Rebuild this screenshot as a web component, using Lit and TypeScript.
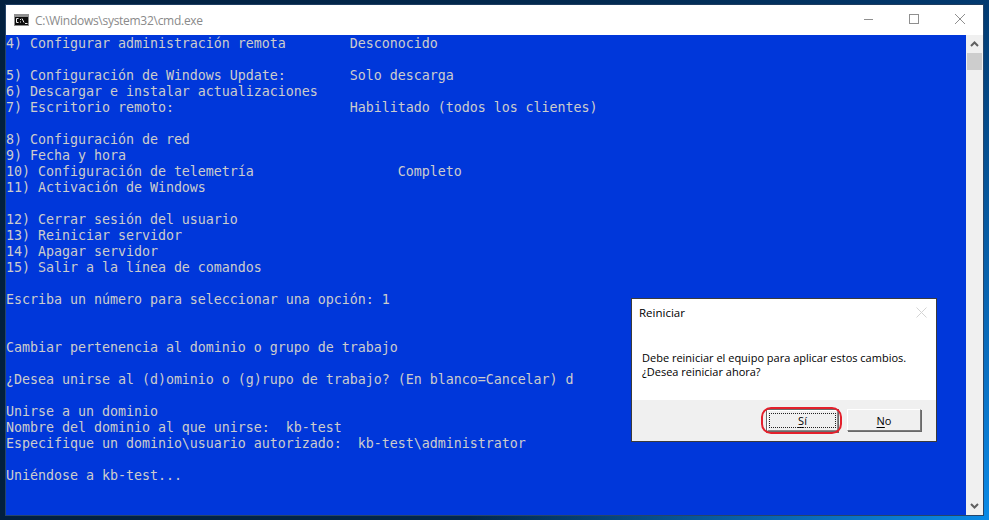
import { LitElement, html, css } from "lit";
import { customElement } from "lit/decorators.js";

const LINES = [
  "4) Configurar administración remota        Desconocido",
  "",
  "5) Configuración de Windows Update:        Solo descarga",
  "6) Descargar e instalar actualizaciones",
  "7) Escritorio remoto:                      Habilitado (todos los clientes)",
  "",
  "8) Configuración de red",
  "9) Fecha y hora",
  "10) Configuración de telemetría                  Completo",
  "11) Activación de Windows",
  "",
  "12) Cerrar sesión del usuario",
  "13) Reiniciar servidor",
  "14) Apagar servidor",
  "15) Salir a la línea de comandos",
  "",
  "Escriba un número para seleccionar una opción: 1",
  "",
  "",
  "Cambiar pertenencia al dominio o grupo de trabajo",
  "",
  "¿Desea unirse al (d)ominio o (g)rupo de trabajo? (En blanco=Cancelar) d",
  "",
  "Unirse a un dominio",
  "Nombre del dominio al que unirse:  kb-test",
  "Especifique un dominio\\usuario autorizado:  kb-test\\administrator",
  "",
  "Uniéndose a kb-test...",
];

@customElement("app-root")
export class AppRoot extends LitElement {
  static styles = css`
    :host { display: block; width: 989px; height: 520px; overflow: hidden; }
    .desktop {
      width: 989px; height: 520px; padding: 4px 5px 4px 5px; box-sizing: border-box;
      background:
        radial-gradient(ellipse 520px 520px at 100% 100%, #0a8ae6 0%, #0a6fc0 30%, rgba(2, 48, 94, 0) 100%),
        linear-gradient(90deg, #02203f 0%, #022a50 60%, #023a70 100%);
    }
    .window {
      height: 512px; box-sizing: border-box; display: flex; flex-direction: column;
      border: 1px solid #26456a; border-top-color: #1c3c60; position: relative;
    }
    .titlebar {
      height: 30px; flex: none; background: #fff; display: flex; align-items: center;
      padding-left: 8px; gap: 6px;
      font: 12px "Open Sans", "Noto Sans", sans-serif; color: #8a8a8a;
    }
    .title { flex: 1; letter-spacing: -0.28px; }
    .caps { display: flex; height: 30px; margin-top: -2px; }
    .cap { width: 46px; height: 30px; display: flex; align-items: center; justify-content: center; }
    .body { flex: 1; display: flex; min-height: 0; }
    .console {
      flex: 1; background: #0037da; color: #cccccc; padding: 1px 0 0 0; overflow: hidden;
      font: 13.33px/16px "DejaVu Sans Mono", monospace; white-space: pre; letter-spacing: -0.03px;
    }
    .line { height: 16px; }
    .sb { width: 17px; flex: none; background: #f0f0f0; display: flex; flex-direction: column; }
    .sb-btn { height: 18px; display: flex; align-items: center; justify-content: center; }
    .thumb { height: 17px; margin: 0 1px; background: #cdcdcd; }
    .sb-fill { flex: 1; }
    .dialog {
      position: absolute; left: 625px; top: 293px; width: 306px; height: 144px; box-sizing: border-box;
      border: 1px solid #3b3b3b; background: #fff; display: flex; flex-direction: column;
      font: 11px "Open Sans", "Noto Sans", sans-serif; color: #000;
    }
    .d-title { height: 26px; flex: none; display: flex; align-items: center; justify-content: space-between;
      padding: 0 9px 0 7px; font-size: 11.5px; }
    .d-msg { flex: 1; padding: 26px 0 0 10px; line-height: 14px; font-size: 11px; }
    .d-foot { height: 41px; flex: none; background: #f0f0f0; display: flex; gap: 9px; justify-content: flex-end;
      align-items: flex-start; padding: 9px 15px 0 0; box-sizing: border-box; }
    .btn {
      position: relative; width: 74px; height: 22px; box-sizing: border-box; background: #f0f0f0;
      border: 1px solid; border-color: #fff #7a7a7a #7a7a7a #fff;
      box-shadow: 1px 1px 0 #696969;
      display: flex; align-items: center; justify-content: center;
      font: 11px "Open Sans", "Noto Sans", sans-serif; color: #000;
    }
    .btn u { text-underline-offset: 2px; }
    .btn.def {
      width: 71px; height: 21px; margin-top: 1px;
      outline: 1px solid #6a6a6a; border-color: #fff #8a8a8a #8a8a8a #fff;
      box-shadow: 1px 2px 0 #696969;
    }
    .btn.def::after { content: ""; position: absolute; inset: 1px 0 1px 0; margin: 1px 1px 1px 1px; border: 1px dotted #222; }
    .ring {
      position: absolute; left: -7px; top: -4px; right: -5px; bottom: -4px;
      border: 2px solid #e3202c; border-radius: 10px;
    }
  `;

  render() {
    return html`<div class="desktop">
      <div class="window">
        <div class="titlebar">
          <svg width="15" height="12" viewBox="0 0 15 12">
            <rect x="0" y="0" width="15" height="12" fill="#8f8f8f"/>
            <rect x="1" y="3" width="13" height="8" fill="#0c0c0c"/>
            <path d="M4.5 4.5h-2v4h2M6.5 5v1M6.5 7.5v1M8 4.5l2 4M11 9.5h2.5" stroke="#f0f0f0" stroke-width="1" fill="none"/>
          </svg>
          <span class="title">C:\\Windows\\system32\\cmd.exe</span>
          <div class="caps">
            <div class="cap"><svg width="10" height="10" viewBox="0 0 10 10"><path d="M1 5.5h9" stroke="#8f8f8f"/></svg></div>
            <div class="cap"><svg width="10" height="10" viewBox="0 0 10 10"><rect x=".5" y=".5" width="9" height="9" fill="none" stroke="#8f8f8f"/></svg></div>
            <div class="cap"><svg width="10" height="10" viewBox="0 0 10 10"><path d="M0 0l10 10M10 0l-10 10" stroke="#8f8f8f"/></svg></div>
          </div>
        </div>
        <div class="body">
          <div class="console">${LINES.map((l) => html`<div class="line">${l}</div>`)}</div>
          <div class="sb">
            <div class="sb-btn"><svg width="9" height="6" viewBox="0 0 9 6"><path d="M1 5l3.5-3.5L8 5" fill="none" stroke="#606060" stroke-width="2"/></svg></div>
            <div class="thumb"></div>
            <div class="sb-fill"></div>
            <div class="sb-btn"><svg width="9" height="6" viewBox="0 0 9 6"><path d="M1 1l3.5 3.5L8 1" fill="none" stroke="#606060" stroke-width="2"/></svg></div>
          </div>
        </div>
        <div class="dialog">
          <div class="d-title"><span>Reiniciar</span>
            <svg width="11" height="11" viewBox="0 0 11 11"><path d="M.5 .5l10 10M10.5 .5l-10 10" stroke="#d4d4d4"/></svg></div>
          <div class="d-msg">Debe reiniciar el equipo para aplicar estos cambios.<br>¿Desea reiniciar ahora?</div>
          <div class="d-foot">
            <div class="btn def"><span class="ring"></span><span><u>S</u>í</span></div>
            <div class="btn"><span><u>N</u>o</span></div>
          </div>
        </div>
      </div>
    </div>`;
  }
}
